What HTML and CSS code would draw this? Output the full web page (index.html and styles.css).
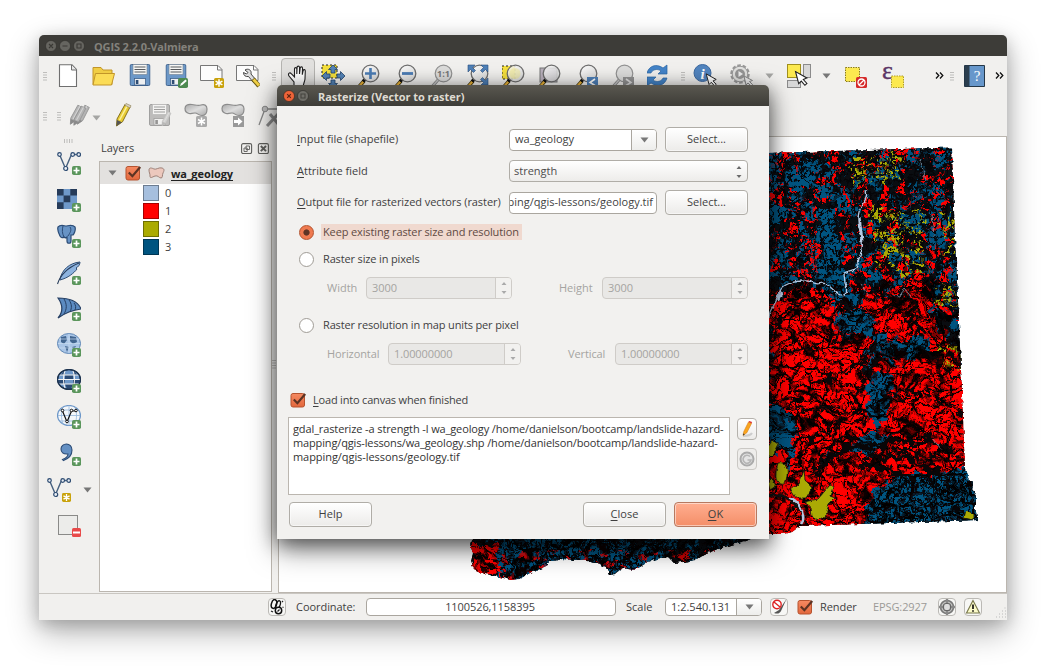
FILE: index.html
```html
<!DOCTYPE html>
<html lang="en">
<head>
<meta charset="utf-8">
<title>QGIS 2.2.0-Valmiera</title>
<link rel="stylesheet" href="styles.css">
</head>
<body>
<svg class="defs" width="0" height="0">
  <defs>
    <linearGradient id="g-check" x1="0" y1="0" x2="0" y2="1"><stop offset="0" stop-color="#f58a62"/><stop offset="1" stop-color="#e2673c"/></linearGradient>
    <linearGradient id="g-lens" x1="0" y1="0" x2="1" y2="1"><stop offset="0" stop-color="#fff"/><stop offset="1" stop-color="#cfd0d0"/></linearGradient>
    <linearGradient id="g-gray" x1="0" y1="0" x2="1" y2="1"><stop offset="0" stop-color="#aaa"/><stop offset=".5" stop-color="#ddd"/><stop offset="1" stop-color="#aaa"/></linearGradient>
    <symbol id="plus" viewBox="0 0 9 9"><rect width="9" height="9" rx="1.8" fill="#5b965c"/><path d="M4.5 1.5v6M1.5 4.5h6" stroke="#fff" stroke-width="1.7"/></symbol>
    <symbol id="star" viewBox="0 0 10 10"><rect width="10" height="10" rx="1.6" fill="#c9a20b"/><path d="M5 1.2v7.6M1.6 3.1l6.8 3.8M8.4 3.1L1.6 6.9" stroke="#fff" stroke-width="1.5"/></symbol>
    <symbol id="floppy" viewBox="0 0 21 22"><rect x=".5" y=".5" width="20" height="21" rx="1.5" fill="#6c98c8" stroke="#40628c"/><path d="M3.5 .5h14v10h-14z" fill="#f6f6f4" stroke="#7b8a99" stroke-width=".7"/><path d="M5 3h11M5 5.5h11M5 8h11" stroke="#55585c"/><rect x="5" y="14.5" width="11" height="6.5" fill="#eef0f2" stroke="#40628c" stroke-width=".8"/><rect x="6.3" y="16" width="2.6" height="4" fill="#2e4d74"/></symbol>
    <symbol id="lens" viewBox="0 0 24 28"><path d="M7 17L-1 26" stroke="#3b3008" stroke-width="3.6"/><path d="M6.5 17.5L-1 26" stroke="#f0b73a" stroke-width="2.2"/><path d="M8.6 14.8L6 17.6" stroke="#111" stroke-width="3.4"/><circle cx="13.5" cy="9.5" r="8.3" fill="url(#g-lens)" fill-opacity=".82" stroke="#6e6e6e" stroke-width="1.3"/></symbol>
    <symbol id="lensg" viewBox="0 0 24 28"><path d="M8 16L-1 26" stroke="#888" stroke-width="3"/><path d="M8 16L-1 26" stroke="#c9c9c9" stroke-width="1.4"/><circle cx="13.5" cy="9.5" r="8.3" fill="#dcdcdb" stroke="#929292" stroke-width="1.2"/></symbol>
    <symbol id="cursor" viewBox="0 0 14 16"><path d="M1 1l3.2 12.2 2.6-2.6 3.6 4.2 2-1.8-3.6-4 3.6-1.6z" fill="#fff" stroke="#222" stroke-width="1.1"/></symbol>
    <symbol id="vee" viewBox="0 0 24 20"><path d="M2.5 2.5l6 14 6-14h6.5" fill="none" stroke="#46607f" stroke-width="1.4"/><g fill="#e9eef4" stroke="#2f4d73" stroke-width="1.2"><circle cx="2.5" cy="2.5" r="1.8"/><circle cx="8.7" cy="16.5" r="2"/><circle cx="15.7" cy="2.5" r="1.8"/><circle cx="21.7" cy="2.5" r="1.8"/></g></symbol>
    <symbol id="pencil" viewBox="0 0 18 24"><path d="M2 16L10 1.5l5 2.6L7.500 18.800 1.500 23z" fill="#e8cb34" stroke="#7a6510" stroke-width=".9"/><path d="M4.600 17L12.300 2.700" stroke="#fbf19b" stroke-width="1.5"/><path d="M2 17l5 2.200L1.500 23z" fill="#555"/><path d="M9.500 2l5.500 3 1-2.300L11 .500z" fill="#d9d2c0" stroke="#8a7c50" stroke-width=".6"/></symbol>
    <symbol id="pencilg" viewBox="0 0 18 24"><path d="M2 16L10 1.500l5 2.600L7.500 18.800 1.500 23z" fill="#b4b4b4" stroke="#8d8d8d" stroke-width=".9"/><path d="M4.600 17L12.300 2.700" stroke="#d4d4d4" stroke-width="1.200"/><path d="M2 17l5 2.200L1.500 23z" fill="#8a8a8a"/></symbol>
    <symbol id="blob" viewBox="0 0 24 14"><path d="M1 5.500C1 2 4 1 8 1.500s6 1.500 9 .5 6 0 6 4-1 6.500-5 6.500-4-2.500-7-2.500-4 1-6 .5-4-1.500-4-5z" fill="url(#g-gray)" stroke="#8c8c8c" stroke-width="1.200"/></symbol>
    <symbol id="tick" viewBox="0 0 17 16"><rect x="1" y="1.500" width="13.500" height="13.500" rx="2" fill="url(#g-check)" stroke="#b5532f"/><path d="M3.800 7.500l3.600 3.700 7.800-9.200" fill="none" stroke="#5c3323" stroke-width="2.200"/></symbol>
    <symbol id="down" viewBox="0 0 9 6"><path d="M.5 .5h8L4.500 5.500z" fill="#777"/></symbol>
    <symbol id="down-off" viewBox="0 0 9 6"><path d="M.5 .5h8L4.500 5.500z" fill="#a5a5a3"/></symbol>
    <symbol id="grip" viewBox="0 0 4 9"><path d="M0 .5h4M0 3h4M0 5.500h4M0 8h4" stroke="#b9b8b5" stroke-width=".9"/></symbol>
    <symbol id="spin" viewBox="0 0 6 14"><path d="M.5 4L3 1l2.500 3zM.500 10L3 13l2.500-3z" fill="currentColor"/></symbol>
    <symbol id="more" viewBox="0 0 9 7"><path d="M1 .5l2.800 3L1 6.500M5 .5l2.800 3L5 6.500" fill="none" stroke="#111" stroke-width="1.300"/></symbol>
    <symbol id="globe" viewBox="0 0 24 22"><ellipse cx="12" cy="10.500" rx="11.500" ry="10" /></symbol>

    <filter id="ragged" x="-5%" y="-5%" width="110%" height="110%" color-interpolation-filters="sRGB"><feTurbulence type="fractalNoise" baseFrequency=".08" numOctaves="3" seed="4"/><feDisplacementMap in="SourceGraphic" scale="22" xChannelSelector="R" yChannelSelector="G"/></filter>
    <filter id="warp" x="-5%" y="-5%" width="110%" height="110%" color-interpolation-filters="sRGB"><feTurbulence type="fractalNoise" baseFrequency=".045" numOctaves="2" seed="9"/><feDisplacementMap in="SourceGraphic" scale="26" xChannelSelector="R" yChannelSelector="G"/></filter>
    <filter id="coast" x="-5%" y="-5%" width="110%" height="110%" color-interpolation-filters="sRGB"><feTurbulence type="fractalNoise" baseFrequency=".2" numOctaves="2" seed="4"/><feDisplacementMap in="SourceGraphic" scale="4" xChannelSelector="R" yChannelSelector="G"/></filter>
    <!-- thin contour lines where the noise crosses zero -->
    <filter id="veins" x="0" y="0" width="100%" height="100%" color-interpolation-filters="sRGB"><feTurbulence type="turbulence" baseFrequency=".035 .075" numOctaves="1" seed="11"/><feColorMatrix values="0 0 0 0 0 0 0 0 0 0 0 0 0 0 0 0 0 0 -18 1.300"/><feComposite in2="SourceAlpha" operator="in"/></filter>
    <filter id="veins2" x="0" y="0" width="100%" height="100%" color-interpolation-filters="sRGB"><feTurbulence type="turbulence" baseFrequency=".08 .06" numOctaves="1" seed="5"/><feColorMatrix values="0 0 0 0 0 0 0 0 0 0 0 0 0 0 0 0 0 0 -14 1.200"/><feComposite in2="SourceAlpha" operator="in"/></filter>
    <filter id="veins3" x="0" y="0" width="100%" height="100%" color-interpolation-filters="sRGB"><feTurbulence type="turbulence" baseFrequency=".13 .15" numOctaves="1" seed="41"/><feColorMatrix values="0 0 0 0 .05 0 0 0 0 0 0 0 0 0 0 0 0 0 -8 .900"/><feComposite in2="SourceAlpha" operator="in"/></filter>
    <filter id="specks" x="0" y="0" width="100%" height="100%" color-interpolation-filters="sRGB"><feTurbulence type="turbulence" baseFrequency=".19 .16" numOctaves="2" seed="7"/><feColorMatrix values="0 0 0 0 .02 0 0 0 0 .02 0 0 0 0 .03 0 0 0 -8 2"/><feComposite in2="SourceAlpha" operator="in"/></filter>
    <filter id="redspots" x="0" y="0" width="100%" height="100%" color-interpolation-filters="sRGB"><feTurbulence type="fractalNoise" baseFrequency=".1 .13" numOctaves="4" seed="23"/><feColorMatrix values="0 0 0 0 1 0 0 0 0 0 0 0 0 0 0 0 0 0 16 -9.200"/><feComposite in2="SourceAlpha" operator="in"/></filter>
    <filter id="bluespots" x="0" y="0" width="100%" height="100%" color-interpolation-filters="sRGB"><feTurbulence type="fractalNoise" baseFrequency=".09 .06" numOctaves="4" seed="31"/><feColorMatrix values="0 0 0 0 0 0 0 0 0 .33 0 0 0 0 .5 0 0 0 12 -5.900"/><feComposite in2="SourceAlpha" operator="in"/></filter>
    <filter id="yellowspots" x="0" y="0" width="100%" height="100%" color-interpolation-filters="sRGB"><feTurbulence type="fractalNoise" baseFrequency=".15" numOctaves="3" seed="52"/><feColorMatrix values="0 0 0 0 .67 0 0 0 0 .67 0 0 0 0 .02 0 0 0 14 -7.200"/><feComposite in2="SourceAlpha" operator="in"/></filter>
    <clipPath id="land"><path d="M700 155L952 147.500 955 240 958 300 961 370 965 470 969 480 973 484 972 490 976 496 976 505 973 508 977 512 978 520 800 526 792 532 783 534 765 534 745 541 728 546 712 551 695 560 683 562 674 563 668 557 660 558 648 562 640 567 634 570 622 568 615 574 609 575 606 567 596 562 580 560 562 559 549 562 545 567 530 573 519 579 510 580 500 577 485 574 474 569 471 562 473 553 470 545 473 538 480 500z"/></clipPath>
  </defs>
</svg>

<div class="window">
  <div class="titlebar"><svg width="40" height="12" viewBox="0 0 40 12"><g fill="#666560" stroke="#2f2e2a" stroke-width=".6"><circle cx="6" cy="6" r="5.500"/><circle cx="20" cy="6" r="5.500"/><circle cx="34" cy="6" r="5.500"/></g><path d="M4 4l4 4M8 4L4 8M17.500 6h5M32 4h4v4h-4z" fill="none" stroke="#3a3935" stroke-width="1.100"/></svg><span>QGIS 2.2.0-Valmiera</span></div>

  <div class="toolbar row1">
    <svg class="grip"><use href="#grip"/></svg>
    <div class="slots">
      <i><svg viewBox="0 0 24 24"><path d="M4.500 .8h12.500l4.500 4.700v17h-17z" fill="#fff" stroke="#6f6f6f" stroke-width="1.100"/><path d="M16.500 1v5h5" fill="#e8e8e8" stroke="#6f6f6f"/></svg></i>
      <i><svg viewBox="0 0 24 24"><path d="M2 20.500V3.500h8l2 2.500h9v14.500z" fill="#f0cd45" stroke="#c29528"/><path d="M4.500 9.500h19l-3 11.500H2z" fill="#fbdc56" stroke="#c29528"/></svg></i>
      <i><svg viewBox="0 0 24 24"><use href="#floppy" x="2.500" y="0" width="21" height="22"/></svg></i>
      <i><svg viewBox="0 0 24 24"><use href="#floppy" x="1.500" y="0" width="21" height="22"/><rect x="14" y="14" width="10" height="10" rx="1.800" fill="#4d8a50"/><path d="M16 22l1-2.500 4.500-4 1.300 1.500-4.500 4z" fill="#fff"/></svg></i>
      <i><svg viewBox="0 0 24 24"><path d="M.5 1.500h17.500l4 4v11H.5z" fill="#fcfcfc" stroke="#777"/><path d="M17.500 1.500v4.500h4.500" fill="none" stroke="#777"/><use href="#star" x="14" y="14" width="10" height="10"/></svg></i>
      <i><svg viewBox="0 0 24 24"><path d="M.5 1.500h17.500l4 4v11H.5z" fill="#fcfcfc" stroke="#777"/><path d="M17.500 1.500v4.500h4.500" fill="none" stroke="#777"/><path d="M9 6c3-2 7 0 6 4l5 6-2.500 2.500-5-6c-3 .5-5-1-5-4l3 1.500 1.500-1.500z" fill="#ddd" stroke="#333" stroke-width=".9"/><path d="M17 15l6 7" stroke="#6b5b15" stroke-width="4.500"/><path d="M17.500 15.500l5.500 6" stroke="#f0cf45" stroke-width="2.800"/></svg></i>
    </div>
    <svg class="grip g2"><use href="#grip"/></svg>
    <div class="slots view">
      <i class="pressed"><svg viewBox="0 0 24 28"><path d="M8 21v-3l-5-6c-1.500-3 1-4 2.500-2L8.500 13V5c0-1.800 2.300-1.800 2.300 0v5l.3-6.500c0-1.800 2.400-1.800 2.400 0v6.500l.7-6c.2-1.600 2.400-1.400 2.300.3l-.2 6.400.9-4.200c.4-1.500 2.200-1 2.100.5L19 15c-.3 3-2 5-2 9H9z" fill="#fff" stroke="#222" stroke-width="1.100"/></svg></i>
      <i><svg viewBox="0 0 24 28"><rect x="1" y="1" width="15" height="13" fill="#f5e03d" stroke="#222" stroke-dasharray="2 2"/><path d="M12 1l4.500 4.500H14V9h-4V5.500H7.500zM1 12l4.500-4.500V10H9v4H5.500v2.500zM24 12l-4.500-4.500V10H16v4h3.500v2.500zM12 24l4.500-4.500H14V16h-4v3.500H7.500z" fill="#5484b8" stroke="#23456c" stroke-width=".8"/></svg></i>
      <i><svg viewBox="0 0 24 28"><use href="#lens" width="24" height="28"/><path d="M13.500 4v11M8 9.500h11" stroke="#4b7cb4" stroke-width="2.600"/></svg></i>
      <i><svg viewBox="0 0 24 28"><use href="#lens" width="24" height="28"/><path d="M8 9.500h11" stroke="#4b7cb4" stroke-width="2.800"/></svg></i>
      <i><svg viewBox="0 0 24 28"><use href="#lensg" width="24" height="28"/><text class="one" x="13.500" y="13" text-anchor="middle">1:1</text></svg></i>
      <i><svg viewBox="0 0 24 28"><use href="#lens" width="24" height="28"/><path d="M2 1h7L6.500 3.500l3 3-2 2-3-3L2 8zM22 1v7l-2.500-2.500-3 3-2-2 3-3L15 1zM22 21h-7l2.500-2.500-3-3 2-2 3 3L22 14z" fill="#4e80b8" stroke="#2a4e7c" stroke-width=".6"/></svg></i>
      <i><svg viewBox="0 0 24 28"><rect x="0" y="2" width="13" height="13" fill="#f5e03d" stroke="#222" stroke-dasharray="2 2"/><use href="#lens" width="24" height="28"/><circle cx="13" cy="9.500" r="5.500" fill="#f0ea9c" opacity=".6"/></svg></i>
      <i><svg viewBox="0 0 24 28"><rect x="2" y="4" width="17" height="14" fill="#b9b0bd" stroke="#777"/><use href="#lens" width="24" height="28"/></svg></i>
      <i><svg viewBox="0 0 24 28"><use href="#lens" width="24" height="28"/><rect x="12" y="13" width="11" height="11" fill="#4e80b8"/><path d="M20 15l-5 3.500 5 3" fill="none" stroke="#fff" stroke-width="1.600"/></svg></i>
      <i><svg viewBox="0 0 24 28"><use href="#lensg" width="24" height="28"/><rect x="12" y="13" width="11" height="11" fill="#929292"/><path d="M15 15l5 3.500-5 3" fill="none" stroke="#ddd" stroke-width="1.600"/></svg></i>
      <i><svg viewBox="0 0 24 28"><g transform="translate(-3 0)"><path d="M3 9C5 2 12-1 19 4l4-3v9h-9l3-3c-4-3-9-1-10 2zM23 14c-2 7-9 10-16 5l-4 3v-9h9l-3 3c4 3 9 1 10-2z" fill="#4384c9" stroke="#2a64a4" stroke-width=".7"/></g></svg></i>
    </div>
    <svg class="grip g3"><use href="#grip"/></svg>
    <div class="slots ident">
      <i><svg viewBox="0 0 24 24"><circle cx="9.500" cy="9" r="8.500" fill="#5285bf" stroke="#3d69a0"/><text class="info" x="9.500" y="14.500" text-anchor="middle">i</text><use href="#cursor" x="12" y="9" width="13" height="14"/></svg></i>
      <i><svg viewBox="0 0 24 24"><circle cx="11" cy="10" r="8.500" fill="none" stroke="#999" stroke-width="2.500" stroke-dasharray="3.500 1.800"/><circle cx="11" cy="10" r="7.800" fill="#e1e1df" stroke="#999"/><circle cx="11" cy="10" r="5" fill="#969696"/><path d="M9.500 7v6l4.500-3z" fill="#eee"/><path d="M15 12l2 9 2-2 3 3 1.500-1.500-3-3 3-1z" fill="#eee" stroke="#888"/></svg></i>
    </div>
    <svg class="arrow a1"><use href="#down-off"/></svg>
    <i class="sel"><svg viewBox="0 0 24 24"><g stroke="#8b8b8b"><rect x=".5" y=".5" width="13" height="13" fill="#fce94f" stroke="#a08f1d"/><rect x="16.500" y=".5" width="7" height="13" fill="#d8d8d8"/><rect x=".500" y="16.500" width="13" height="7" fill="#d8d8d8"/></g><use href="#cursor" x="7" y="6.500" width="15" height="16"/></svg></i>
    <svg class="arrow a2"><use href="#down"/></svg>
    <div class="slots selects">
      <i><svg viewBox="0 0 24 24"><rect x="1.500" y="3.500" width="14" height="14" fill="#fce94f" stroke="#8d7c18" stroke-dasharray="1.500 1"/><rect x="12" y="13" width="11" height="11" rx="1.500" fill="#d52a2a"/><circle cx="17.500" cy="18.500" r="3.500" fill="none" stroke="#fff" stroke-width="1.300"/><path d="M15 21l5-5" stroke="#fff" stroke-width="1.300"/></svg></i>
      <i><svg class="over" viewBox="0 0 24 24"><text class="eps" x="1" y="14.500">ε</text><rect x="10.500" y="12" width="12" height="11.500" fill="#fce94f" stroke="#b09c20" stroke-dasharray="1.500 1"/></svg></i>
    </div>
    <svg class="more m1"><use href="#more"/></svg>
    <svg class="grip g4"><use href="#grip"/></svg>
    <i class="book"><svg viewBox="0 0 24 24"><path d="M1.500 1.500h20v21h-20z" fill="#6797cb" stroke="#253747"/><path d="M2 2h4.500v20H2z" fill="#2b3e4f"/><text class="help" x="14" y="17" text-anchor="middle">?</text></svg></i>
    <svg class="more m2"><use href="#more"/></svg>
  </div>

  <div class="toolbar row2">
    <svg class="grip"><use href="#grip"/></svg>
    <svg class="grip g5"><use href="#grip"/></svg>
    <svg class="pens" viewBox="0 0 24 24"><use href="#pencilg" x="0" width="16" height="23"/><use href="#pencilg" x="7" width="16" height="23"/><use href="#pencilg" x="3.500" y="1" width="16" height="23"/></svg>
    <svg class="arrow a3"><use href="#down-off"/></svg>
    <div class="slots edit">
      <i><svg viewBox="0 0 24 24"><use href="#pencil" x="3" width="18" height="24"/></svg></i>
      <i><svg class="dim" viewBox="0 0 24 24"><use href="#floppy" x="1" y="1" width="21" height="22"/><use href="#pencilg" x="13" y="7" width="12" height="17"/></svg></i>
      <i><svg viewBox="0 0 24 24"><use href="#blob" x="0" y="0" width="24" height="14"/><rect x="12" y="13" width="11" height="11" rx="1.500" fill="#aaa"/><path d="M17.500 14.500v8M14 16.500l7 4M21 16.500l-7 4" stroke="#fff" stroke-width="1.500"/></svg></i>
      <i><svg viewBox="0 0 24 24"><use href="#blob" x="0" y="0" width="24" height="14"/><rect x="12" y="13" width="11" height="11" fill="#999"/><path d="M13 17h4v-2.500l4.500 4L17 22.500V20h-4z" fill="#fff"/></svg></i>
      <i><svg viewBox="0 0 24 24"><path d="M2 22L8 6h16" fill="none" stroke="#888" stroke-width="1.300"/><circle cx="8" cy="6" r="2.800" fill="#bbb" stroke="#888"/><path d="M10 23L22 10M13 11l9 11" stroke="#8b8b8b" stroke-width="3"/></svg></i>
    </div>
  </div>

  <div class="main">
    <div class="side">
      <svg class="vgrip" viewBox="0 0 9 4"><path d="M.5 0v4M3 0v4M5.500 0v4M8 0v4" stroke="#b9b8b5" stroke-width=".9"/></svg>
      <i><svg viewBox="0 0 24 24"><use href="#vee" width="24" height="20"/><use href="#plus" x="15" y="14" width="9" height="9"/></svg></i>
      <i><svg viewBox="0 0 24 24"><path d="M0 1h20v20H0z" fill="#6e98c9"/><path d="M0 1h6.600v6.600H0zM13.300 1H20v6.600h-6.700zM6.600 7.600h6.700v6.700H6.600zM0 14.300h6.600V21H0z" fill="#263b59"/><use href="#plus" x="15" y="15" width="9" height="9"/></svg></i>
      <i><svg viewBox="0 0 24 24"><path d="M1 3c3-3 6-1 8-1s6-2 9 1c1 3-1 7-2 8h-2v6c0 3-4 3-4 0v-4c-1 1-2 1-3 0-1 1-3 1-4-1S0 6 1 3z" fill="#6793c5" stroke="#2c4c76" stroke-width="1.200"/><path d="M6 2c-1 4-1 7 1 11M13 3c2 3 0 6-2 9" fill="none" stroke="#2c4c76"/><use href="#plus" x="15" y="15" width="9" height="9"/></svg></i>
      <i><svg viewBox="0 0 24 24"><path d="M3 18C5 9 12 2 23 1c0 3-2 5-4 6l1 1c-3 4-9 9-17 11z" fill="#8db3df" stroke="#2f4d73"/><path d="M.5 23C3 15 10 7 22 2" fill="none" stroke="#263b59" stroke-width="1.100"/><use href="#plus" x="15" y="15" width="9" height="9"/></svg></i>
      <i><svg viewBox="0 0 24 24"><path d="M1 1c10 0 20 3 23 11C16 13 8 16 1 21c5-6 5-13 0-20z" fill="#5c8bc1" stroke="#263f63" stroke-width="1.200"/><path d="M7 2c3 5 3 10 0 15M12 3c3 4 3 8 1 12M17 6c2 2 2 5 1 7" fill="none" stroke="#263f63"/><use href="#plus" x="15" y="15" width="9" height="9"/></svg></i>
      <i><svg viewBox="0 0 24 24"><g fill="#a9c5e6" stroke="#5e86b5"><use href="#globe" width="24" height="22"/></g><path d="M4 4l5-1 1 4-3 4-3-2zM13 3l6 1 1 5-4 2-3-3zM8 13l4 1-2 5zM15 14l4-1-2 4z" fill="#41658f"/><path d="M12 .5v20M1 10.500h22M2 6h20M2 15h20" stroke="#c9dcf0" stroke-width=".7"/><use href="#plus" x="15" y="15" width="9" height="9"/></svg></i>
      <i><svg viewBox="0 0 24 24"><g fill="#6e98c9" stroke="#1e3450" stroke-width="1.200"><use href="#globe" width="24" height="22"/></g><path d="M8 6h8v4H8zM1 10.500h7v4.500H2zM16 10.500h7l-1 4.500h-6zM8 15h8l-2 5h-4zM3 6l5-4v4zM16 2l5 4h-5z" fill="#2a4a74"/><path d="M1.500 6h21M1 10.500h22M1.500 15h21M8 1.500c-2 6-2 12 0 18M16 1.500c2 6 2 12 0 18" fill="none" stroke="#f4f4f4" stroke-width="1.100"/><ellipse cx="12" cy="10.500" rx="11.400" ry="9.900" fill="none" stroke="#1e3450" stroke-width="1.200"/><use href="#plus" x="15" y="15" width="9" height="9"/></svg></i>
      <i><svg viewBox="0 0 24 24"><g fill="#f4f7fa" stroke="#6e98c9" stroke-width="1.200"><use href="#globe" width="24" height="22"/></g><path d="M1 10.500h22M3 5h18M3 16h18M12 .5v20M6 2c-2 5-2 12 0 17M18 2c2 5 2 12 0 17" fill="none" stroke="#96b6db" stroke-width=".8"/><path d="M5.500 6l4.500 11 4.500-11h5" fill="none" stroke="#111" stroke-width="1.200"/><g fill="#fff" stroke="#111"><circle cx="5.500" cy="5.500" r="1.300"/><circle cx="10" cy="16.500" r="1.300"/><circle cx="14.500" cy="5.500" r="1.300"/><circle cx="19" cy="5.500" r="1.300"/></g><use href="#plus" x="15" y="15" width="9" height="9"/></svg></i>
      <i><svg viewBox="0 0 24 24"><path d="M5.500 17.500c4-1.500 5.500-3 5.500-5.500C6 12.500 4 10 4 7s2.500-5 5.500-5S15 4.500 15 8c0 5-3 8.500-8.500 10.500z" fill="#6490c3" stroke="#2c4c76" stroke-width="1.100"/><use href="#plus" x="15" y="15" width="9" height="9"/></svg></i>
      <div class="newlayer"><svg class="ic" viewBox="0 0 24 24"><use href="#vee" width="24" height="20"/><use href="#star" x="15" y="15" width="9" height="9"/></svg><svg class="arrow"><use href="#down"/></svg></div>
      <i><svg viewBox="0 0 24 24"><rect x="1.500" y="1.500" width="19" height="19" fill="#ececea" stroke="#8a8a88"/><rect x="15" y="14" width="9" height="9" rx="1.500" fill="#e84a4a"/><path d="M16 18.500h7" stroke="#fff" stroke-width="2"/></svg></i>
    </div>
    <div class="layers">
      <div class="phead"><span class="t-layers">Layers</span><svg width="28" height="11" viewBox="0 0 28 11"><g fill="none" stroke="#5f5f5c" stroke-width="1.100"><rect x=".6" y=".6" width="10" height="10" rx="1.500"/><rect x="17.400" y=".6" width="10" height="10" rx="1.500"/><path d="M5 3h3.500v3.500H5zM3 5h3.200v3.500H3z" stroke-width=".9"/><path d="M19.800 3l5.200 5.200M25 3l-5.200 5.200" stroke-width="1.900"/></g></svg></div>
      <div class="tree">
        <div class="lrow"><svg class="arrow big"><use href="#down"/></svg><svg class="tk"><use href="#tick"/></svg><svg class="pg" viewBox="0 0 17 13"><path d="M1 3c0-3 3-2 5-1s5-2 8-1 2 3 1 5 0 5-2 5-3-3-6-2-5 3-5 0-1-3-1-6z" fill="#ecc8bd" stroke="#9d8178"/></svg><b class="t-geo">wa_geology</b></div>
        <div class="cls"><span class="sw c0"></span>0</div>
        <div class="cls"><span class="sw c1"></span>1</div>
        <div class="cls"><span class="sw c2"></span>2</div>
        <div class="cls"><span class="sw c3"></span>3</div>
      </div>
    </div>
    <div class="split"><svg viewBox="0 0 4 9"><use href="#grip" width="4" height="9"/></svg></div>
    <svg class="map" viewBox="279 137 727 455">
      <g filter="url(#coast)"><g clip-path="url(#land)">
        <path d="M460 130h530v460H460z" fill="#0a0d11"/>
        <g filter="url(#ragged)">
          <path d="M440 120h560v480H440z" filter="url(#bluespots)"/>
          <path d="M740 130h240v190H740z" filter="url(#redspots)"/>
          <path d="M470 545h30l4 30-30 2z" fill="#f00"/>
          <path d="M497 535h70l20 5 90 2-10 26-60 8-40-14-50 20-20-10z" fill="#005480"/>
          <path d="M820 205l12 0 3 60-14 10zM828 225l14 14 8 38-14 34-12-24zM910 215h16v14h-12zM800 160l14 0-8 34-12-6zM835 268h14l2 34-12-6z" fill="#005480"/>
          <path d="M768 310l22-20 30-3 16 14-6 26-24 10-10 18-26 6zM768 362l40-6 48 2 14 30-8 58-40 12-16 30-34 36-14 18z" fill="#f00"/>
          <path d="M776 345l40-22 16-10 24 4 16 28-10 26-92 8zM862 300l60-6 16 12-14 10 20 16 14 26 10 24 4 86-30 16-64-20-20-40 10-50 22-34-26-20zM905 276l20-4 4 24-16 6z" fill="#f00"/>
          <path d="M800 480l46-30 30 10 50-20 38 18 12 24-46-6-54 12-6 34-68 28-30 8-14-14z" fill="#f00"/>
          <path d="M765 500l30-4 8 20-10 26-30 6z" fill="#f00"/>
          <path d="M840 310l24 0 12 16-26 14-14-10zM888 342l34-8 10 14-24 14-28-2zM868 372l20 0 6 20-14 36-14-10zM768 400l16 2 14 30-8 38-10-20-12-2zM856 438l26-8 14 8-20 12-22 4z" fill="#005480"/>
          <path d="M868 500l30-26 40 0 40-4 6 70-116 0z" fill="#005480"/>
        </g>
        <g filter="url(#ragged)"><path d="M868 208h56l-2 68-22-4-24-10zM940 212h24v42h-24zM850 155h50v30h-50zM935 285h26v20h-26zM940 345h24v20h-24z" filter="url(#yellowspots)"/></g>
        <path d="M760 140h210v150l-200 8-10-10z" filter="url(#specks)"/>
        <path d="M870 496l30-20 80-10v70H870z" filter="url(#specks)"/>
        <path d="M500 530h260v60H500z" filter="url(#specks)"/>
        <path d="M500 550h260v40H500z" filter="url(#redspots)" opacity=".8"/>
        <g filter="url(#warp)"><path d="M450 290h540v310H450z" filter="url(#veins)"/><path d="M450 285h540v320H450z" filter="url(#veins2)"/><path d="M450 285h540v320H450z" filter="url(#veins3)"/></g>
        <g fill="none" stroke="#090607" stroke-width="2.500" filter="url(#ragged)"><path d="M770 358l40-12 30-10 20-16 30-10 40 24 26 28M768 400l50 10 36-6 12-30 30-30M780 450l40-16 20-14 44-18 40-10 40 20M810 470l30-30 36-12 24 22 60 10M860 460l50-10 20 14 20 24M770 330l16-20 30-12 28 6M820 380l60-20M915 300l10 50 36 34M880 330l-22 40"/><path d="M810 476l36-28 40-4 40-6 34 14M866 452l40 6 40 20M862 462l30 8 20 10" stroke-width="5"/></g>
        <path d="M804 502l14-3 12-14 3 2-3 9 5 2-6 6-4 14-5-1-3 3-5-3-1-10zM778 463c8-2 10 6 9 12s-1 10-6 9-7-8-3-21zM768 482l4-4 4 8-6 4zM791 490l8-6 5-14 1 10 7 8-6 10-10 0zM767 448l6-8 6 4-6 12-6 0zM966 510l8 4 0 6-10-2z" fill="#aaaa04" stroke="#111" stroke-width=".8"/>
        <path d="M768 496c14-4 28 4 36 22" fill="none" stroke="#111" stroke-width="3"/>
        <g fill="none" stroke="#b4c8e2" stroke-width="1.300"><path d="M866 190c2 8-2 12-5 17s-4 14-2 20 4 15 3 22-4 8-4 15-4 4-14 9l1 10c4 9 0 14-5 12s-8-8-14-11-6 2-12-1-7-2-12-2-16 2-20 7-4 11-8 17-5 8-5 14"/><path d="M859 217l3 24" stroke-width="3"/><path d="M782 292l-4 8" stroke-width="3"/><path d="M790 498c8 2 12 12 13 18s-1 6-2 8" stroke-width="2.500"/><path d="M861 284l8 12M892 296l8 1 4-9 8 10M920 160l6 20M932 215l2 22M932 438l10 12" stroke="#8999ac" stroke-width=".8"/></g>
      </g></g>
    </svg>
  </div>

  <div class="status">
    <span class="ibtn b1"><svg viewBox="0 0 16 16"><ellipse cx="5" cy="5" rx="2.600" ry="4.500" transform="rotate(15 5 5)" fill="none" stroke="#111" stroke-width="1.500"/><ellipse cx="9" cy="6" rx="2" ry="4.500" transform="rotate(20 9 6)" fill="none" stroke="#111" stroke-width="1.300"/><circle cx="9.500" cy="11.500" r="3.200" fill="#fff" stroke="#111" stroke-width="1.500"/><path d="M8.500 12.500l2-2M13 3l1-1M2 12l2 1M13.500 8l1 .5" stroke="#222" stroke-width="1.300"/></svg></span>
    <span class="t-coord">Coordinate:</span>
    <span class="field coord"><span>1100526,1158395</span></span>
    <span class="t-scale">Scale</span>
    <span class="combo scale"><span class="val">1:2.540.131</span><span class="dd"><svg class="arrow"><use href="#down"/></svg></span></span>
    <span class="ibtn b2"><svg viewBox="0 0 16 16"><path d="M15.500 0L8 11l-5 3c4 1.500 6 0 7-2z" fill="#555"/><circle cx="6" cy="5.500" r="4.200" fill="#fff" stroke="#d22" stroke-width="1.400"/><path d="M3 3l6 5" stroke="#d22" stroke-width="1.400"/></svg></span>
    <svg class="tk tkr"><use href="#tick"/></svg>
    <span class="t-render">Render</span>
    <span class="t-epsg">EPSG:2927</span>
    <span class="ibtn b3"><svg viewBox="0 0 16 16"><circle cx="8" cy="8" r="6.500" fill="#c5c5c3" stroke="#777" stroke-width="1.600"/><path d="M8 0v16M0 8h16" stroke="#888" stroke-width="2.400"/><rect x="4.500" y="4.500" width="7" height="7" rx="2.500" fill="#ddd" stroke="#666" stroke-width="1.200"/></svg></span>
    <span class="ibtn b4"><svg viewBox="0 0 16 16"><path d="M8 1.500L14.500 14h-13z" fill="#fbfac8" stroke="#77764a" stroke-width="1.100"/><path d="M8 5.500v4.500M8 11.300v1.500" stroke="#111" stroke-width="1.700"/></svg></span>
    <svg class="sizer" viewBox="0 0 11 11"><path d="M1 10h10M4 7h7M7 4h4M9.500 1h1.500" stroke="#bbb" stroke-dasharray="1 2"/></svg>
  </div>

  <div class="dialog">
    <div class="dtitle"><svg width="26" height="12" viewBox="0 0 26 12"><circle cx="6" cy="6" r="5.500" fill="#ee6338" stroke="#3a2a22" stroke-width=".7"/><path d="M4.200 4.200l3.600 3.600M7.800 4.200L4.200 7.800" stroke="#5c2412" stroke-width="1.200"/><circle cx="20" cy="6" r="5.500" fill="#6f6e68" stroke="#32312d" stroke-width=".7"/><path d="M18 4h4v4h-4z" fill="none" stroke="#45443f" stroke-width="1.100"/></svg><span>Rasterize (Vector to raster)</span></div>
    <div class="body">
      <div class="form f1">
        <label class="t-in"><u>I</u>nput file (shapefile)</label><span class="combo in"><span class="val">wa_geology</span><span class="dd"><svg class="arrow"><use href="#down"/></svg></span></span><span class="btn">Select...</span>
      </div>
      <div class="form f2">
        <label class="t-attr"><u>A</u>ttribute field</label><span class="select">strength<svg><use href="#spin"/></svg></span>
      </div>
      <div class="form f3">
        <label class="t-out"><u>O</u>utput file for rasterized vectors (raster)</label><span class="field out"><span>ping/qgis-lessons/geology.tif</span></span><span class="btn">Select...</span>
      </div>
      <div class="opt o1"><span class="radio on"></span><label class="hl"><span class="t-keep">Keep existing raster size and resolution</span></label></div>
      <div class="opt o2"><span class="radio"></span><label><span class="t-size">Raster size in pixels</span></label></div>
      <div class="nums n1"><span class="t-w">Width</span><span class="spin s1"><span>3000</span><em><svg><use href="#spin"/></svg></em></span><span class="t-h">Height</span><span class="spin s1"><span>3000</span><em><svg><use href="#spin"/></svg></em></span></div>
      <div class="opt o3"><span class="radio"></span><label><span class="t-res">Raster resolution in map units per pixel</span></label></div>
      <div class="nums n2"><span class="t-w">Horizontal</span><span class="spin s2"><span>1.00000000</span><em><svg><use href="#spin"/></svg></em></span><span class="t-h">Vertical</span><span class="spin s2"><span>1.00000000</span><em><svg><use href="#spin"/></svg></em></span></div>
      <div class="load"><svg class="tk"><use href="#tick"/></svg><label class="t-load"><u>L</u>oad into canvas when finished</label></div>
      <div class="cmd">
        <div class="ta"><div class="l1">gdal_rasterize -a strength -l wa_geology /home/danielson/bootcamp/landslide-hazard-</div><div class="l2">mapping/qgis-lessons/wa_geology.shp /home/danielson/bootcamp/landslide-hazard-</div><div class="l3">mapping/qgis-lessons/geology.tif</div></div>
        <div class="tools"><span><svg viewBox="0 0 14 16"><path d="M3 15c3 0 8-1 9-3" stroke="#ccc" fill="none" stroke-width="2"/><path d="M3 14.500l.8-4L8.500 1l3 1.500-4.700 9.300z" fill="#f9a51f" stroke="#d8811b" stroke-width=".6"/><path d="M8.500 1l3 1.500.6-1.500-2.800-1z" fill="#d33"/><path d="M3 14.500l.3-2 1.500.8z" fill="#333"/></svg></span><span class="off"><svg viewBox="0 0 16 16"><circle cx="8" cy="8" r="6.500" fill="#e4e4e4" stroke="#aaa" stroke-width="2"/><path d="M11 5.500A4 4 0 1 0 12 9H8.500" fill="none" stroke="#b5b5b5" stroke-width="1.600"/></svg></span></div>
      </div>
      <div class="buttons"><span class="btn">Help</span><span class="btn push"><span><u>C</u>lose</span></span><span class="btn ok"><span><u>O</u>K</span></span></div>
    </div>
  </div>
</div>
</body>
</html>
```
FILE: styles.css
```css
* { box-sizing: border-box; }
body { margin: 0; width: 1049px; height: 670px; overflow: hidden; background: #fff; padding: 35px 42px 50px 39px; font: 11px/14px "Open Sans", "Noto Sans", sans-serif; color: #3f3f3f; white-space: nowrap; }
.defs { position: absolute; }
svg { display: block; flex: none; overflow: hidden; }
svg.over { overflow: visible; }
i { display: flex; align-items: center; justify-content: center; font-style: normal; flex: none; }
i > svg, .ic { width: 24px; height: 24px; }
u { text-decoration: underline; text-underline-offset: 2px; text-decoration-thickness: 1px; text-decoration-skip-ink: none; }
.window { position: relative; width: 968px; height: 585px; background: #f1f0ee; border-radius: 5px 5px 0 0; box-shadow: 0 12px 32px rgba(0,0,0,.3), 0 4px 16px rgba(0,0,0,.18); display: flex; flex-direction: column; }
.titlebar { height: 21px; flex: none; border-radius: 5px 5px 0 0; background: #3d3c38; color: #84827c; font-weight: 700; display: flex; align-items: center; padding: 2px 0 0 6px; gap: 9px; }
.titlebar span { letter-spacing: -.15px; }
.titlebar svg { margin-top: -1px; }
.toolbar { display: flex; align-items: center; height: 40px; flex: none; padding-left: 4px; }
.row1 { height: 39px; }
.row2 { height: 41px; }
.grip { width: 4px; height: 9px; margin-top: 1px; }
.slots { display: flex; }
.slots i { width: 36.200px; height: 36px; }
.row1 > .slots:nth-child(2) { margin-left: 2px; }
.g2 { margin-left: 6px; }
.view { margin-left: 5px; }
.view i svg { height: 28px; margin-top: 4px; }
.view .pressed { border: 1px solid #b5b4b1; border-radius: 4px; background: #e2e1df; width: 34px; height: 36px; }
.g3 { margin-left: 4px; }
.ident { margin-left: 2px; }
.arrow { width: 9px; height: 6px; }
.a1 { margin-left: 6px; }
.sel { margin-left: 13px; }
.a2 { margin-left: 11px; }
.selects { margin-left: 7px; }
.more { width: 9px; height: 7px; }
.m1 { margin-left: 24px; }
.g4 { margin-left: 6px; }
.book { margin-left: 9px; }
.m2 { margin-left: 8px; }
.one { font: 700 9px "Open Sans", sans-serif; fill: #777; }
.info { font: italic 700 15px "Liberation Serif", serif; fill: #fff; }
.eps { font: 26px "Liberation Serif", serif; fill: #5c3566; stroke: #5c3566; stroke-width: .4px; }
.help { font: 15px "Liberation Serif", serif; fill: #fff; }
.g5 { margin-left: 10px; }
.pens { width: 24px; height: 24px; margin-left: 8px; }
.a3 { margin-left: -1px; margin-top: 5px; }
.edit { margin-left: 5px; }
.row2 .slots, .pens { margin-top: -1px; }
.dim { filter: grayscale(1) opacity(.55); }
.main { flex: 1; display: flex; align-items: stretch; min-height: 0; }
.side { width: 60px; display: flex; flex-direction: column; padding-top: 3px; }
.vgrip { width: 9px; height: 4px; margin: 0 0 3px 25px; }
.side i, .newlayer { height: 36.200px; flex: none; }
.side i { width: 60px; }
.newlayer { display: flex; align-items: center; padding-left: 8px; gap: 12px; }
.layers { width: 173px; display: flex; flex-direction: column; padding-bottom: 1px; }
.phead { height: 25px; display: flex; align-items: center; justify-content: space-between; padding: 0 3px 1px 2px; }
.tree { flex: 1; border: 1px solid #bbb6af; background: #fff; }
.lrow { height: 22px; background: #e3e1df; display: flex; align-items: center; padding-left: 8px; margin-bottom: 0; }
.lrow .big { margin-right: 8px; }
.tk { width: 17px; height: 16px; }
.pg { width: 17px; height: 13px; margin: 0 6px 0 6px; }
.t-geo { border-bottom: 1px solid #222; color: #222; line-height: 13px; margin-top: 1px; letter-spacing: -.08px; }
.cls { height: 18px; display: flex; align-items: center; padding-left: 43px; gap: 6px; }
.sw { width: 16px; height: 16px; border: 1px solid rgba(0,0,0,.35); }
.c0 { background: #a6bfde; } .c1 { background: #f00; } .c2 { background: #aa0; } .c3 { background: #005480; }
.split { width: 6px; display: flex; align-items: center; }
.split svg { width: 4px; height: 9px; }
.map { width: 729px; height: 457px; border: 1px solid #bbb6af; background: #fff; }
.status { height: 27px; flex: none; border-top: 1px solid #c9c6c1; display: flex; align-items: center; padding-left: 229px; }
.ibtn { width: 18px; height: 18px; border: 1px solid #bbb9b5; border-radius: 4px; background: #f7f7f5; display: flex; align-items: center; justify-content: center; }
.ibtn svg { width: 16px; height: 16px; }
.field { background: #fff; border: 1px solid #aaa69f; border-radius: 4px; display: flex; align-items: center; overflow: hidden; }
.t-coord { width: 70px; margin-left: 10px; letter-spacing: -.05px; }
.coord { width: 250px; height: 18px; justify-content: center; letter-spacing: -.08px; padding-right: 2px; }
.t-scale { width: 39px; margin-left: 10px; }
.combo { display: flex; background: #fff; border: 1px solid #aaa69f; border-radius: 4px; overflow: hidden; height: 22px; }
.combo .val { flex: 1; padding: 0 0 1px 5px; align-self: center; }
.combo .dd { width: 25px; border-left: 1px solid #aaa69f; background: linear-gradient(#fff, #ededeb); display: flex; align-items: center; justify-content: center; }
.scale { width: 97px; height: 18px; }
.scale .val { padding-bottom: 0; }
.b2 { margin-left: 8px; }
.tkr { margin-left: 9px; }
.t-render { width: 53px; margin-left: 6px; margin-top: -1px; letter-spacing: -.05px; }
.t-epsg { color: #9b9a97; width: 65px; letter-spacing: -.1px; }
.b4 { margin-left: 8px; }
.sizer { width: 11px; height: 11px; margin: 10px 0 0 13px; }

.dialog { position: absolute; left: 238px; top: 50px; width: 492px; height: 454px; background: #f2f1ef; border-radius: 5px 5px 0 0; box-shadow: 0 10px 28px rgba(0,0,0,.5), 0 4px 18px rgba(0,0,0,.42); }
.dtitle { height: 21px; border-radius: 5px 5px 0 0; background: linear-gradient(#5a5850, #3d3c37); color: #dfdbd2; font-weight: 700; display: flex; align-items: center; gap: 9px; padding: 2px 0 0 6px; letter-spacing: -.05px; }
.dtitle svg { margin-top: -1px; }
.body { padding: 21px 12px 0 11px; display: flex; flex-direction: column; }
.form { height: 25px; display: flex; align-items: center; padding-left: 9px; }
.form label { width: 212px; }
.f1 label, .f3 label { padding-bottom: 1px; }
.t-out { letter-spacing: -.07px; }
.in { width: 148px; }
.btn { width: 83px; height: 25px; border: 1px solid #b0ada7; border-radius: 4px; background: linear-gradient(#fff, #ecebe9); display: flex; align-items: center; justify-content: center; padding-bottom: 1px; box-shadow: inset 0 0 0 1px rgba(255,255,255,.5); }
.form .btn { margin-left: 8px; }
.f2 { height: 22px; margin-top: 8px; }
.select { width: 239px; height: 22px; border: 1px solid #b0ada7; border-radius: 4px; background: linear-gradient(#fff, #edecea); display: flex; align-items: center; justify-content: space-between; padding: 0 5px 0 4px; color: #4c4c4c; }
.select svg { width: 6px; height: 14px; color: #6a6a6a; margin-top: 2px; }
.f3 { margin-top: 8px; }
.out { width: 148px; height: 22px; justify-content: flex-end; padding: 0 3px 1px 0; }
.opt { height: 16px; display: flex; align-items: center; padding-left: 11px; gap: 7px; }
.opt label { height: 16px; line-height: 16px; padding: 0 3px 0 2px; letter-spacing: -.15px; }
.opt .hl { background: #f0d9cf; color: #5f4a43; width: 201px; letter-spacing: -.13px; }
.radio { width: 15px; height: 15px; border-radius: 50%; border: 1px solid #a09c96; background: #fff; }
.radio.on { border-color: #b4522d; background: radial-gradient(circle, #5f3425 0 2.700px, #ef7a50 3.500px); }
.o1 { margin-top: 9px; }
.o2 { margin-top: 11px; }
.n1, .n2 { height: 22px; display: flex; align-items: center; color: #a5a4a1; padding-left: 39px; margin-top: 10px; }
.o3 { margin-top: 18px; }
.spin { height: 22px; border: 1px solid #cfccc8; border-radius: 4px; background: #e9e8e6; display: flex; align-items: center; padding-left: 5px; }
.spin > span { flex: 1; }
.spin em { width: 16px; height: 20px; border-left: 1px solid #cfccc8; background: #f2f1ef; border-radius: 0 3px 3px 0; display: flex; align-items: center; justify-content: center; }
.spin em svg { width: 6px; height: 14px; color: #aaa; }
.s1 { width: 146px; } .s2 { width: 133px; }
.n1 .t-w { width: 39px; } .n1 .t-h { width: 43px; margin-left: 47px; }
.n2 { letter-spacing: -.1px; }
.n2 .t-w { width: 61px; } .n2 .t-h { width: 47px; margin-left: 47px; }
.load { height: 16px; margin-top: 27px; display: flex; align-items: center; padding-left: 2px; gap: 6px; letter-spacing: -.19px; }
.cmd { display: flex; margin-top: 9px; gap: 7px; }
.ta { width: 442px; height: 78px; border: 1px solid #bbb6af; background: #fff; padding: 4px; color: #333; line-height: 14px; overflow: hidden; }
.l1, .l2 { letter-spacing: -.115px; }
.l2 { letter-spacing: -.14px; }
.l3 { letter-spacing: -.06px; }
.tools { display: flex; flex-direction: column; gap: 8px; padding-top: 1px; }
.tools span { width: 20px; height: 22px; border: 1px solid #b5b2ad; border-radius: 4px; background: linear-gradient(#fff, #ecebe9); display: flex; align-items: center; justify-content: center; }
.tools .off { border-color: #cac8c4; background: #eeedeb; }
.tools svg { width: 16px; height: 16px; }
.buttons { display: flex; margin-top: 7px; padding-left: 1px; }
.push { margin-left: 211px; }
.ok { margin-left: 8px; background: linear-gradient(#ffae90, #f48e68); border-color: #b77960; }
```
